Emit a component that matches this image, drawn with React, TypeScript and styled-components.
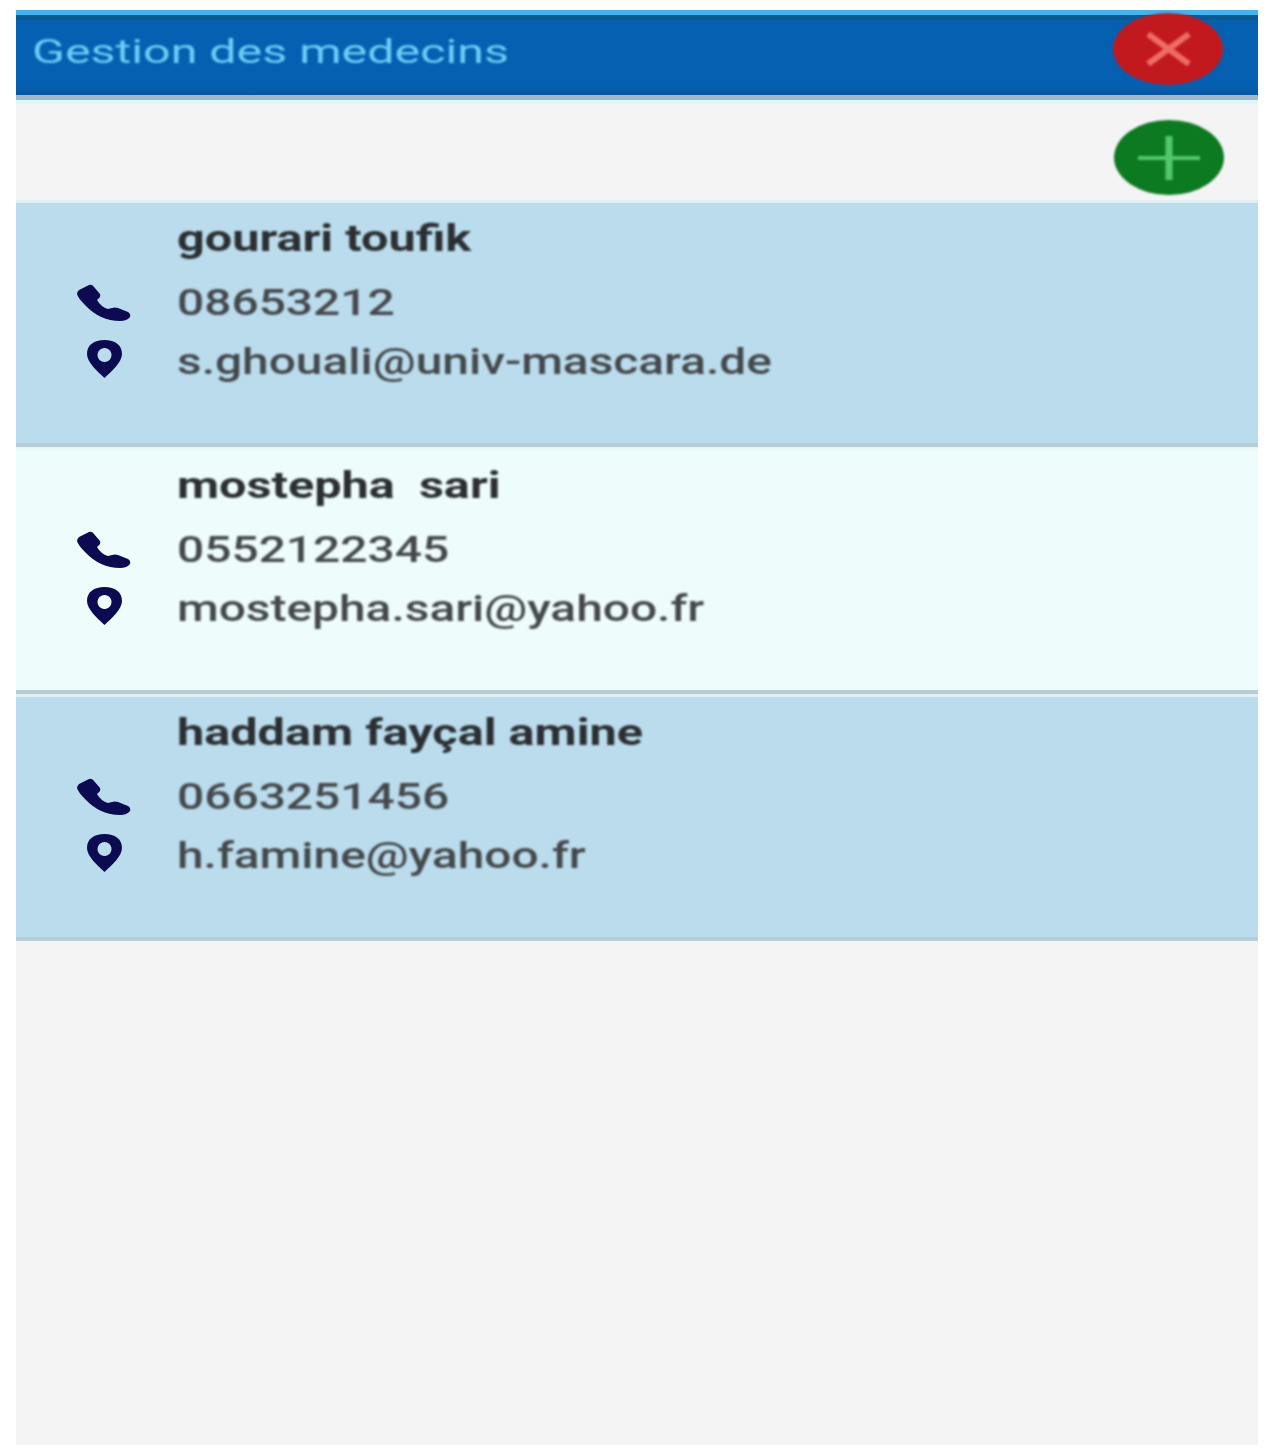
import * as React from 'react';
import styled, { createGlobalStyle } from 'styled-components';

const GlobalStyle = createGlobalStyle`
   html, body {
      margin: 0;
      padding: 0;
      background: #ffffff;
   }
`;

const Screen = styled.div`
   width: 1242px;
   height: 1435px;
   margin: 10px 0 0 16px;
   background: #f4f4f5;
   display: flex;
   flex-direction: column;
   font-family: Roboto, 'Liberation Sans', sans-serif;
`;

const Header = styled.header`
   height: 90px;
   box-sizing: border-box;
   flex: none;
   display: flex;
   align-items: center;
   justify-content: space-between;
   padding: 0 35px 0 16px;
   background: linear-gradient(#0b5a94 0, #0b5a94 5px, #0660b1 6px, #0660b1 70px, #08589f 80px);
   border-top: 5px solid #45b4ee;
   border-bottom: 5px solid #9fb9ca;
`;

const Title = styled.h1`
   margin: 0;
   font-size: 33px;
   font-weight: 400;
   white-space: nowrap;
   color: #6ccdf6;
   transform-origin: left center;
   transform: translateY(-4px) scaleX(1.465);
   filter: blur(0.8px);
`;

const RoundButton = styled.button<{ $bg: string; $fg: string }>`
   width: 110px;
   height: 75px;
   padding: 0;
   border: none;
   border-radius: 50%;
   display: flex;
   align-items: center;
   justify-content: center;
   background: ${(p) => p.$bg};
   color: ${(p) => p.$fg};
   filter: blur(0.8px);
`;

const CloseButton = styled(RoundButton)`
   height: 72px;
   transform: translateY(-6px);
`;

const Toolbar = styled.div`
   height: 100px;
   flex: none;
   display: flex;
   align-items: center;
   justify-content: flex-end;
   padding: 11px 34px 0 0;
   box-sizing: border-box;
   border-top: 4px solid #dcf8fb;
`;

const List = styled.div`
   display: flex;
   flex-direction: column;
`;

const Row = styled.article<{ $odd: boolean }>`
   height: 247px;
   box-sizing: border-box;
   padding: 11px 0 0 61px;
   display: grid;
   grid-template-columns: 54px 1fr;
   grid-template-rows: 50px 78px 40px;
   column-gap: 46px;
   align-items: center;
   background: ${(p) => (p.$odd ? '#bbdcec' : '#effcfc')};
   border-top: 3px solid ${(p) => (p.$odd ? '#e0f0f5' : '#e6fafa')};
   border-bottom: 4px solid #b7cdd6;
`;

const Name = styled.div`
   grid-column: 2;
   justify-self: start;
   font-size: 36px;
   font-weight: 700;
   line-height: 40px;
   white-space: pre;
   color: #2b2f33;
   transform-origin: left center;
   transform: scaleX(1.35);
   filter: blur(0.9px);
`;

const Detail = styled.div`
   justify-self: start;
   font-size: 36px;
   font-weight: 500;
   line-height: 40px;
   white-space: pre;
   color: #44484c;
   transform-origin: left center;
   transform: scaleX(1.33);
   filter: blur(0.9px);
`;

const IconCell = styled.div<{ $lift: number }>`
   display: flex;
   justify-content: center;
   margin-bottom: ${(p) => p.$lift}px;
   color: #0c0b52;
   filter: blur(0.7px);
`;

const PhoneIcon = () => (
   <svg width="54" height="37" viewBox="0 0 54 37" aria-hidden="true">
      <path
         fill="currentColor"
         d="M2 6 L12 1 Q15 0 17 3 L23 10 Q24 13 21 15 L20 16 Q24 23 31 25 L35 24 Q38 23 41 24 L51 28 Q54 30 53 33 Q50 37 43 37 Q23 37 8 21 Q1 14 0 10 Q0 8 2 6 Z"
      />
   </svg>
);

const PinIcon = () => (
   <svg width="35" height="38" viewBox="0 0 35 38" aria-hidden="true">
      <path
         fill="currentColor"
         fillRule="evenodd"
         d="M17.5 0 C28 0 35 5 35 14 C35 22 25 31 17.5 38 C10 31 0 22 0 14 C0 5 7 0 17.5 0 Z M17.5 8 A7 7 0 1 0 17.51 8 Z"
      />
   </svg>
);

type Medecin = { name: string; phone: string; email: string };

const medecins: Medecin[] = [
   { name: 'gourari toufik', phone: '08653212', email: 's.ghouali@univ-mascara.de' },
   { name: 'mostepha  sari', phone: '0552122345', email: 'mostepha.sari@yahoo.fr' },
   { name: 'haddam fayçal amine', phone: '0663251456', email: 'h.famine@yahoo.fr' },
];

export default function App() {
   return (
      <>
         <GlobalStyle />
         <Screen>
            <Header>
               <Title>Gestion des medecins</Title>
               <CloseButton $bg="#c2191f" $fg="#ee6b66" aria-label="Fermer">
                  <svg width="47" height="34" viewBox="0 0 47 34" aria-hidden="true">
                     <path d="M3 2 L44 32 M44 2 L3 32" stroke="currentColor" strokeWidth="6" fill="none" />
                  </svg>
               </CloseButton>
            </Header>
            <Toolbar>
               <RoundButton $bg="#0c7a20" $fg="#52c86c" aria-label="Ajouter">
                  <svg width="62" height="44" viewBox="0 0 62 44" aria-hidden="true">
                     <path d="M0 22 H62" stroke="currentColor" strokeWidth="4" fill="none" />
                     <path d="M31 0 V44" stroke="currentColor" strokeWidth="7" fill="none" />
                  </svg>
               </RoundButton>
            </Toolbar>
            <List>
               {medecins.map((m, i) => (
                  <Row key={m.phone} $odd={i % 2 === 0}>
                     <Name>{m.name}</Name>
                     <IconCell $lift={2}>
                        <PhoneIcon />
                     </IconCell>
                     <Detail>{m.phone}</Detail>
                     <IconCell $lift={6}>
                        <PinIcon />
                     </IconCell>
                     <Detail>{m.email}</Detail>
                  </Row>
               ))}
            </List>
         </Screen>
      </>
   );
}
